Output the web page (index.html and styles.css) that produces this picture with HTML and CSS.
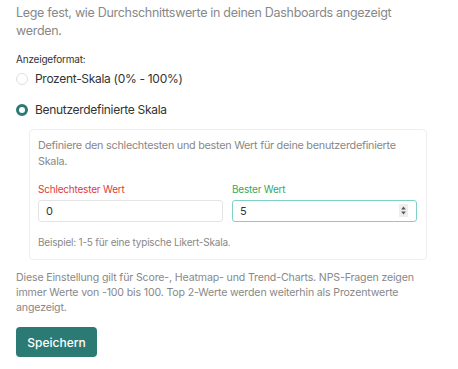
FILE: index.html
```html
<!DOCTYPE html>
<html lang="de">
<head>
  <meta charset="UTF-8" />
  <title>Anzeigeformat</title>
  <link rel="stylesheet" href="styles.css">
</head>
<body>
  <div class="settings">
    <p class="intro">Lege fest, wie Durchschnittswerte in deinen Dashboards angezeigt werden.</p>

    <div class="field-label">Anzeigeformat:</div>
    <label class="radio first">
      <span class="dot"></span>
      Prozent-Skala (0% - 100%)
    </label>
    <label class="radio">
      <span class="dot checked"></span>
      Benutzerdefinierte Skala
    </label>

    <div class="scale-box">
      <p class="box-text">Definiere den schlechtesten und besten Wert für deine benutzerdefinierte Skala.</p>
      <div class="scale-grid">
        <div class="scale-col">
          <span class="lbl worst">Schlechtester Wert</span>
          <div class="num-input">0</div>
        </div>
        <div class="scale-col">
          <span class="lbl best">Bester Wert</span>
          <div class="num-input focused">5
            <span class="spin">
              <svg width="5" height="9" viewBox="0 0 5 9"><path d="M2.5 0.5 L4.8 3.6 H0.2 Z M2.5 8.5 L4.8 5.4 H0.2 Z" fill="#555"/></svg>
            </span>
          </div>
        </div>
      </div>
      <p class="box-hint">Beispiel: 1-5 für eine typische Likert-Skala.</p>
    </div>

    <p class="note">Diese Einstellung gilt für Score-, Heatmap- und Trend-Charts. NPS-Fragen zeigen immer Werte von -100 bis 100. Top 2-Werte werden weiterhin als Prozentwerte angezeigt.</p>

    <button class="save">Speichern</button>
  </div>
</body>
</html>
```

FILE: styles.css
```css
body {
  margin: 0;
  font-family: Inter, "Noto Sans", sans-serif;
  background-color: #fff;
  color: #222;
}
.settings {
  padding: 4px 16px 0;
  width: 411px;
}
.intro {
  margin: 0;
  font-size: 12.5px;
  letter-spacing: -0.3px;
  line-height: 18px;
  color: #888;
}
.field-label {
  margin-top: 12px;
  font-size: 10px;
  letter-spacing: -0.2px;
  line-height: 14px;
  color: #333;
}
.radio {
  display: flex;
  align-items: center;
  gap: 7px;
  height: 18px;
  font-size: 12px;
  letter-spacing: -0.3px;
  line-height: 18px;
  color: #333;
}
.radio.first {
  margin-top: 4px;
}
.radio + .radio {
  margin-top: 13px;
}
.dot {
  width: 12px;
  height: 12px;
  border: 1px solid #e0e0e0;
  border-radius: 50%;
  box-sizing: border-box;
}
.dot.checked {
  border: 3.5px solid #2c7a74;
}
.scale-box {
  margin: 10px 0 0 13px;
  width: 398px;
  box-sizing: border-box;
  border: 1px solid #eee;
  border-radius: 4px;
  padding: 8px 9px 10px 8px;
}
.box-text {
  margin: 0;
  font-size: 10.8px;
  letter-spacing: -0.25px;
  line-height: 16px;
  color: #888;
}
.scale-grid {
  display: grid;
  grid-template-columns: 1fr 1fr;
  gap: 9px;
  margin-top: 12px;
}
.scale-col {
  display: flex;
  flex-direction: column;
  gap: 4px;
}
.lbl {
  font-size: 10px;
  letter-spacing: -0.2px;
  line-height: 14px;
}
.worst { color: #dc3b3b; }
.best { color: #37a85a; }
.num-input {
  position: relative;
  height: 22px;
  box-sizing: border-box;
  border: 1px solid #e4e4e4;
  border-radius: 3px;
  padding: 0 7px;
  font-size: 11px;
  line-height: 20px;
  color: #333;
}
.num-input.focused {
  border-color: #80d0c8;
}
.spin {
  position: absolute;
  right: 8px;
  top: 3px;
  width: 9px;
  height: 13px;
  background: #eee;
  display: flex;
  align-items: center;
  justify-content: center;
}
.box-hint {
  margin: 13px 0 0;
  font-size: 10px;
  letter-spacing: -0.2px;
  line-height: 14px;
  color: #888;
}
.note {
  margin: 10px 0 0;
  font-size: 10.6px;
  letter-spacing: -0.15px;
  line-height: 15px;
  color: #888;
}
.save {
  margin-top: 12px;
  background-color: #2c7a74;
  color: #fff;
  border: none;
  border-radius: 4px;
  width: 81px;
  height: 30px;
  font-family: Inter, "Noto Sans", sans-serif;
  font-size: 12px;
  font-weight: 500;
  cursor: pointer;
}
```
